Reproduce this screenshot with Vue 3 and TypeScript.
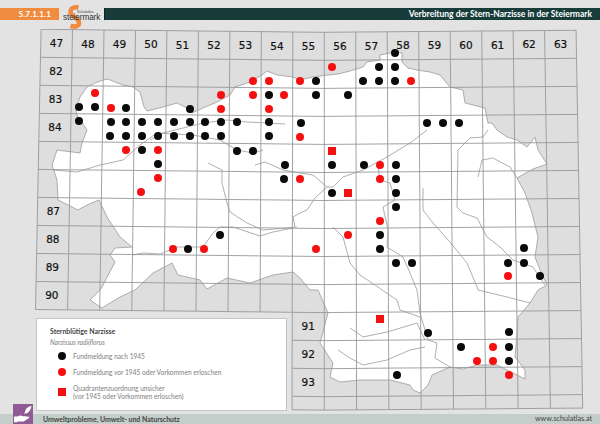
<script setup lang="ts">
import { computed } from 'vue';

// Raster ist leicht verzerrt: Spalten fächern nach unten auf, Zeilen knicken in der Mitte
const CX = 324.3;
function gx(i: number, y: number) {
  return CX + (i - 9) * (31.47 + 0.83 * (y - 30) / 378);
}
function gy(x: number, r: number) {
  const sag = x < CX ? 3 * (x - 41) / (CX - 41) : 3 - 2 * (x - CX) / (576 - CX);
  return 29.3 + 28.03 * r + sag;
}
function pt(i: number, r: number) {
  const y0 = 29.3 + 28.03 * r + 1.5;
  const x = gx(i, y0);
  return { x, y: gy(x, r) };
}
function line(i0: number, r0: number, i1: number, r1: number) {
  const pts: string[] = [];
  const steps = Math.ceil(Math.max(Math.abs(i1 - i0), Math.abs(r1 - r0)));
  for (let s = 0; s <= steps; s++) {
    const p = pt(i0 + (i1 - i0) * s / steps, r0 + (r1 - r0) * s / steps);
    pts.push(p.x.toFixed(1) + ',' + p.y.toFixed(1));
  }
  return pts.join(' ');
}

const gridLines = computed(() => {
  const out: string[] = [];
  for (let r = 0; r <= 10; r++) out.push(line(0, r, 17, r));
  for (let r = 11; r <= 13; r++) out.push(line(8, r, 17, r));
  out.push(line(8, 13.48, 17, 13.48));
  for (let i = 0; i <= 7; i++) out.push(line(i, 0, i, 10));
  for (let i = 8; i <= 17; i++) out.push(line(i, 0, i, 13.48));
  return out;
});

// Grauer Grund der Rasterfläche unter dem Landesumriss
const gridFill = computed(() =>
  [line(0, 0, 17, 0), line(17, 0, 17, 13.48), line(17, 13.48, 8, 13.48), line(8, 13.48, 8, 10), line(8, 10, 0, 10), line(0, 10, 0, 0)].join(' ')
);

const labels = computed(() => {
  const out: { t: string; x: number; y: number }[] = [];
  const at = (t: string, i: number, r: number) => {
    const p = pt(i + 0.5, r + 0.5);
    out.push({ t, x: p.x, y: p.y });
  };
  for (let c = 47; c <= 63; c++) at(String(c), c - 47, 0);
  at('82', 0, 1); at('83', 0, 2); at('84', 0, 3);
  at('87', 0, 6); at('88', 0, 7); at('89', 0, 8); at('90', 0, 9);
  at('91', 8, 10); at('92', 8, 11); at('93', 8, 12);
  return out;
});

const outline = `76,110 80,97 87,87 95,83 103,80 108,79 115,82 123,85 133,87 140,92 144,107 147,111
 163,107 177,103 185,107 192,113 203,108 217,102 230,95 235,87 250,82 262,75 267,71 277,75 293,77 300,80
 313,77 328,75 338,74 350,71 363,67 367,62 380,60 380,55 395,52 402,53 402,62 408,68 417,70 430,72 440,75 450,87
 463,90 465,103 485,108 488,123 492,123 497,130 507,137 517,140 527,147 535,137 538,150 547,164 533,169 517,178
 525,193 532,213 538,237 535,257 540,270 547,285 538,290 530,303 518,317 517,333 515,357 525,370 525,379 507,370
 497,365 477,365 463,369 450,367 432,375 428,385 420,393 413,390 410,385 390,380 360,380 340,382 330,377 333,363
 320,343 328,313 318,290 310,290 300,278 293,272 273,275 250,283 227,278 207,289 200,280 178,275 172,263 153,273
 135,290 120,297 102,308 90,300 100,290 102,287 115,262 110,255 115,248 132,247 120,237 107,217 99,200 87,205
 78,210 58,200 57,180 52,165 57,150 80,153 82,143 87,130 85,127 77,115`;

const rivers = [
  '53,170 77,172 100,165 123,160 140,145 157,133 193,135 220,140 237,150 253,153 263,150',
  '150,140 163,133 187,127 203,123 227,120 247,122 267,123 285,124',
  '255,165 265,162 283,170 300,173 313,175 327,187 333,187 343,177 363,170 387,157 410,143 427,130',
  '327,187 315,198 307,210 300,213 293,217 295,227',
  '208,163 222,170 222,183 227,203 230,212 247,223 263,230 297,227',
  '133,255 143,253 160,254 177,247 203,247 213,233 220,227 233,227 260,236 273,232 293,228',
  '378,167 380,180 390,183 395,200 383,207 388,230 387,247 403,257 410,273 417,290 420,313 428,340 437,343 435,358 450,367',
  '423,188 423,210 433,223 450,242 467,263 477,287 478,290 507,297 530,303',
  '478,177 482,160 493,158 510,167 517,178',
  '488,130 483,137 470,138 458,150 457,207 463,213 477,218 487,237 500,247 513,260 533,267 545,285',
  '333,227 343,237 350,263 360,275 375,285 382,290 397,300 400,310 420,317',
  '350,328 363,337 387,332 417,323 425,340',
  '338,350 350,358 363,365 387,360 410,350 425,347',
];

const black = [
  [395, 53], [379, 67], [395, 67], [316, 81], [363, 81], [379, 81], [395, 81], [269, 95], [316, 95], [348, 95],
  [79, 107], [95, 107], [126, 108], [190, 109], [79, 121],
  [111, 122], [126, 122], [142, 122], [158, 122], [174, 122], [190, 122], [205, 122], [221, 122], [237, 122],
  [269, 122], [301, 123], [427, 123], [443, 123], [459, 123],
  [110, 136], [126, 136], [142, 136], [158, 136], [174, 136], [190, 136], [205, 136], [221, 136], [269, 136],
  [142, 150], [237, 151], [253, 151], [158, 164], [285, 165], [332, 165], [364, 165], [396, 165],
  [284, 179], [396, 179], [332, 193], [396, 193], [396, 207], [220, 235], [380, 235],
  [188, 249], [380, 249], [524, 248], [396, 263], [412, 263], [508, 263], [524, 263], [540, 276],
  [428, 333], [509, 332], [461, 347], [509, 347], [509, 361], [397, 375],
];
const red = [
  [332, 67], [253, 81], [269, 81], [300, 81], [411, 81], [95, 93], [221, 95], [253, 95], [284, 95],
  [111, 108], [221, 109], [269, 109], [300, 137], [126, 150], [158, 150], [380, 165],
  [158, 178], [300, 179], [380, 179], [141, 192], [380, 221], [348, 235],
  [173, 249], [204, 249], [316, 249], [508, 276], [493, 347], [477, 361], [493, 361], [509, 375],
];
const squares = [[332, 151], [348, 193], [380, 319]];
</script>

<template>
  <div class="page">
    <header class="head">
      <div class="chapter">5.7.1.1.1</div>
      <svg class="logo" viewBox="0 0 40 25" width="40" height="25">
        <path d="M15.5 3.5C11 2.5 7.5 4 7.5 8c0 5 8.5 5.500 8.500 11c0 3.500-4 4.200-8.500 3" fill="none" stroke="#f08a3c" stroke-width="4.500" />
        <text x="14" y="8.500" class="logo-small">Schulatlas</text>
        <text x="0" y="15.500" class="logo-big">steiermark</text>
      </svg>
      <div class="title">Verbreitung der Stern-Narzisse in der Steiermark</div>
    </header>

    <main class="map">
      <svg class="canvas" viewBox="0 29 600 385" width="600" height="385">
        <polygon :points="gridFill" fill="#dedede" />
        <polygon :points="outline" fill="#fff" stroke="#9a9a9a" stroke-width="0.8" stroke-linejoin="round" />
        <polyline v-for="(r, i) in rivers" :key="'r' + i" :points="r" fill="none" stroke="#8c8c8c" stroke-width="0.7" />
        <polyline v-for="(l, i) in gridLines" :key="'g' + i" :points="l" fill="none" stroke="#979797" stroke-width="0.9" />
        <text v-for="l in labels" :key="l.t" :x="l.x" :y="l.y + 3.800" class="cell-label">{{ l.t }}</text>
        <circle v-for="(d, i) in black" :key="'b' + i" :cx="d[0]" :cy="d[1]" r="4" fill="#0a0a0a" />
        <circle v-for="(d, i) in red" :key="'c' + i" :cx="d[0]" :cy="d[1]" r="4" fill="#f50f0f" />
        <rect v-for="(d, i) in squares" :key="'s' + i" :x="d[0] - 4" :y="d[1] - 4" width="8" height="8" fill="#f50f0f" />
      </svg>

      <section class="legend">
        <div class="legend-title">Sternblütige Narzisse</div>
        <div class="legend-latin">Narzissus radiiflorus</div>
        <div class="legend-row"><span class="mark dot black"></span>Fundmeldung nach 1945</div>
        <div class="legend-row"><span class="mark dot red"></span>Fundmeldung vor 1945 oder Vorkommen erloschen</div>
        <div class="legend-row"><span class="mark sq"></span><span>Quadrantenzuordnung unsicher<br>(vor 1945 oder Vorkommen erloschen)</span></div>
      </section>

      <svg class="topic-icon" viewBox="0 0 20 20" width="20" height="20">
        <rect width="20" height="20" fill="#8e5b95" />
        <path d="M18.500 2c-4 .5-6.500 3-7 8l1.500-.5c3-1 5-4 5.500-7.500z" fill="#fff" />
        <path d="M1 12.500h3.500c2-1.500 4-1 5.500-.3h3c1 0 1 1.600 0 1.800h-3l5-1.500c1.200-.3 1.700 1 .7 1.700l-5 3.300H5l-1 .7H1z" fill="#fff" />
      </svg>
    </main>

    <footer class="foot">
      <span class="topic">Umweltprobleme, Umwelt- und Naturschutz</span>
      <span class="site">www.schulatlas.at</span>
    </footer>
  </div>
</template>

<style>
html, body { margin: 0; background: #e3e3e3; }
</style>

<style scoped>
.page {
  width: 600px;
  height: 424px;
  display: flex;
  flex-direction: column;
  background: #e3e3e3;
  font-family: Lato, "Open Sans", sans-serif;
  overflow: hidden;
}
.head {
  height: 29px;
  display: flex;
  align-items: flex-start;
  box-sizing: border-box;
  padding-top: 8px;
}
.chapter {
  width: 59px;
  height: 12px;
  box-sizing: border-box;
  background: #f08c40;
  color: #fff;
  font-size: 8px;
  font-weight: 700;
  line-height: 12px;
  text-align: right;
  padding-right: 8px;
  letter-spacing: 0.2px;
}
.logo {
  margin: -4px 0 0 4px;
  flex: none;
}
.logo-small {
  font-size: 3.600px;
  fill: #444;
  font-family: "Liberation Sans", sans-serif;
}
.logo-big {
  font-size: 8.200px;
  fill: #333;
  font-family: "Liberation Sans", sans-serif;
  letter-spacing: -0.1px;
}
.title {
  margin-left: 1px;
  flex: 1;
  height: 12px;
  box-sizing: border-box;
  background: #173c3a;
  border-left: 1px solid #0c2524;
  color: #fff;
  font-size: 8.500px;
  font-weight: 700;
  line-height: 12px;
  text-align: right;
  padding-right: 8px;
}
.map {
  flex: 1;
  position: relative;
  min-height: 0;
}
.canvas {
  display: block;
}
.cell-label {
  font-family: "DejaVu Sans", sans-serif;
  font-size: 10.500px;
  text-anchor: middle;
  fill: #111;
  stroke: #111;
  stroke-width: 0.2;
}
.legend {
  position: absolute;
  left: 36px;
  top: 289px;
  width: 251px;
  height: 93px;
  box-sizing: border-box;
  background: #fff;
  border: 1px solid #c4c4c4;
  padding: 8px 0 0 13px;
  font-size: 6.600px;
  line-height: 8.500px;
  color: #808080;
}
.legend-title {
  font-weight: 700;
  color: #444;
  font-size: 6.900px;
}
.legend-latin {
  font-style: italic;
  margin-top: 2.500px;
  margin-bottom: 5px;
}
.legend-row {
  display: flex;
  align-items: center;
  gap: 7px;
  margin-left: 8px;
  margin-bottom: 7.500px;
}
.mark {
  flex: none;
  width: 8px;
  height: 8px;
}
.dot { border-radius: 50%; }
.black { background: #0a0a0a; }
.red { background: #f50f0f; }
.sq { background: #f50f0f; }
.topic-icon {
  position: absolute;
  left: 13px;
  bottom: -10px;
  z-index: 2;
}
.foot {
  height: 10px;
  flex: none;
  display: flex;
  justify-content: space-between;
  align-items: center;
  background: #c3cdca;
  padding: 0 8px 0 43px;
  color: #444;
  font-size: 6.950px;
  font-weight: 700;
  line-height: 10px;
}
.site { font-size: 7.200px; font-weight: 400; }
</style>
